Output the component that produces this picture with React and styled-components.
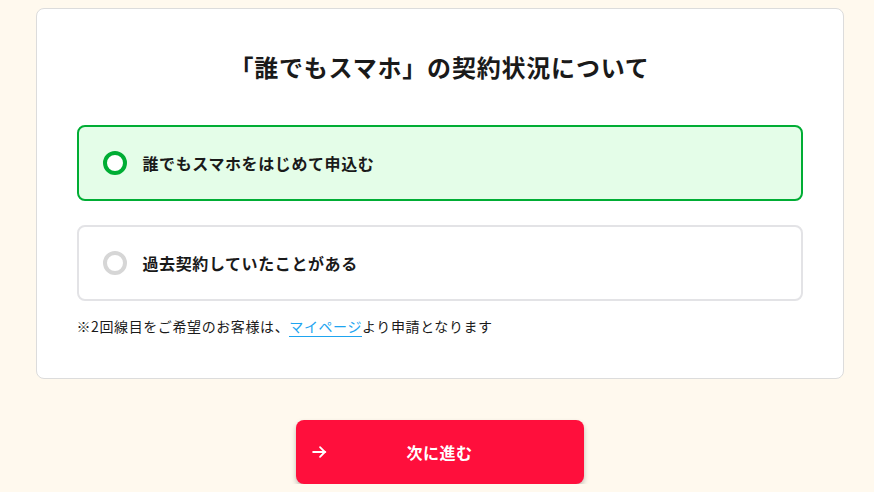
import { useState } from "react";
import styled, { createGlobalStyle } from "styled-components";

const GlobalStyle = createGlobalStyle`
  html, body {
    margin: 0;
    padding: 0;
    background: #fff9ee;
    font-family: "Noto Sans CJK JP", "Noto Sans", sans-serif;
    color: #1a1a1a;
  }
`;

const options = [
  { id: "new", label: "誰でもスマホをはじめて申込む" },
  { id: "past", label: "過去契約していたことがある" },
];

export default function App() {
  const [selected, setSelected] = useState("new");

  return (
    <>
      <GlobalStyle />
      <Page>
        <Card>
          <Title>「誰でもスマホ」の契約状況について</Title>
          <OptionList>
            {options.map((o) => (
              <Option
                key={o.id}
                $active={selected === o.id}
                onClick={() => setSelected(o.id)}
              >
                <Radio $active={selected === o.id} />
                <span>{o.label}</span>
              </Option>
            ))}
          </OptionList>
          <Note>
            ※2回線目をご希望のお客様は、<NoteLink href="#">マイページ</NoteLink>
            より申請となります
          </Note>
        </Card>
        <NextButton>
          <Arrow viewBox="0 0 16 16">
            <path
              d="M2 8h11.5M8.5 3.5L13 8l-4.5 4.5"
              fill="none"
              stroke="#fff"
              strokeWidth="1.7"
              strokeLinecap="round"
              strokeLinejoin="round"
            />
          </Arrow>
          次に進む
        </NextButton>
      </Page>
    </>
  );
}

const Page = styled.div`
  display: flex;
  flex-direction: column;
  align-items: center;
  padding: 8px 0 0 5px;
`;

const Card = styled.div`
  box-sizing: border-box;
  width: 808px;
  background: #fff;
  border: 1px solid #dcdcdc;
  border-radius: 8px;
  padding: 38px 40px 41px;
`;

const Title = styled.h2`
  margin: 0 0 38px;
  text-align: center;
  font-size: 24px;
  line-height: 40px;
  font-weight: 700;
  letter-spacing: 0.8px;
`;

const OptionList = styled.div`
  display: flex;
  flex-direction: column;
  gap: 24px;
`;

const Option = styled.div`
  box-sizing: border-box;
  height: 76px;
  display: flex;
  align-items: center;
  gap: 16px;
  padding: 0 24px;
  border-radius: 8px;
  border: 2px solid ${(p) => (p.$active ? "#00ad34" : "#e3e3e6")};
  background: ${(p) => (p.$active ? "#e4fde8" : "#fff")};
  cursor: pointer;
  font-size: 16px;
  font-weight: 700;
  letter-spacing: 0.6px;
`;

const Radio = styled.span`
  box-sizing: border-box;
  width: 24px;
  height: 24px;
  border-radius: 50%;
  border: 4px solid ${(p) => (p.$active ? "#00ad34" : "#d6d6d6")};
  background: #fff;
  flex-shrink: 0;
`;

const Note = styled.p`
  margin: 14px 0 0;
  font-size: 14px;
  line-height: 22px;
  letter-spacing: 0.6px;
`;

const NoteLink = styled.a`
  color: #1ea4f0;
  text-decoration: none;
  border-bottom: 1px solid #1ea4f0;
`;

const NextButton = styled.button`
  position: relative;
  margin-top: 41px;
  width: 288px;
  height: 64px;
  border: none;
  border-radius: 8px;
  background: #ff0f3c;
  color: #fff;
  font-family: inherit;
  font-size: 16px;
  font-weight: 700;
  letter-spacing: 0.5px;
  box-shadow: 0 3px 5px rgba(0, 0, 0, 0.25);
  cursor: pointer;
`;

const Arrow = styled.svg`
  position: absolute;
  left: 15px;
  top: 50%;
  width: 17px;
  height: 17px;
  transform: translateY(-50%);
`;
